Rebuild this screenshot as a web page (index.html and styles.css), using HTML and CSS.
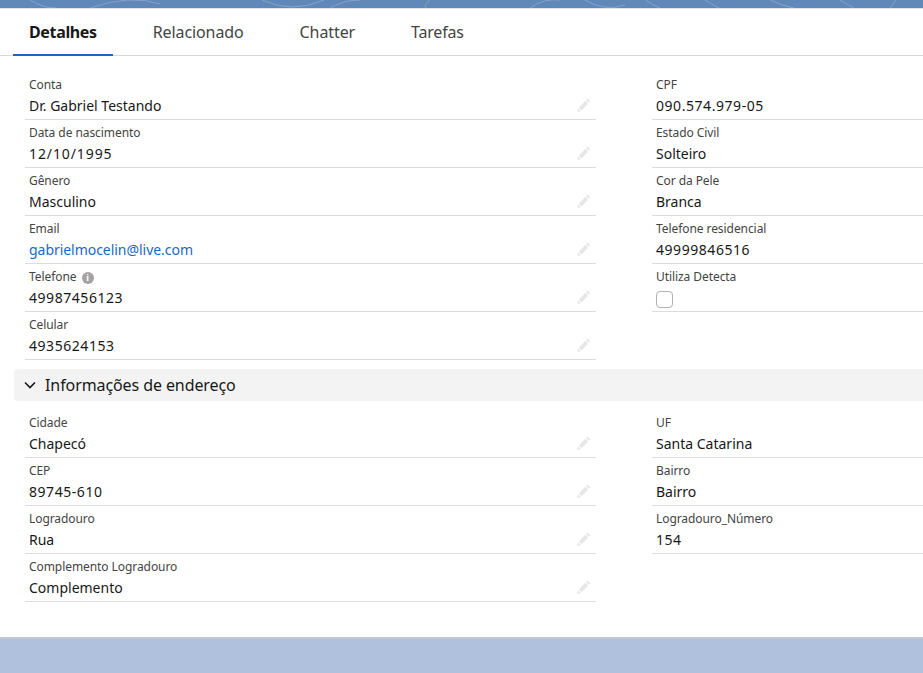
FILE: index.html
```html
<!DOCTYPE html>
<html lang="pt-BR">
<head>
<meta charset="utf-8">
<title>Detalhes</title>
<link rel="stylesheet" href="styles.css">
</head>
<body>
<svg width="0" height="0" class="defs"><defs>
<symbol id="pen" viewBox="0 0 16 16"><path d="M11.6 1.6l2.8 2.8-1.4 1.4-2.8-2.8zM9.4 3.8l2.8 2.8-6.6 6.6-2.8-2.8zM2 11.2l2.8 2.8-3.8 1z"/></symbol>
</defs></svg>
<div class="banner">
<svg class="swirl" width="923" height="8" viewBox="0 0 923 8" fill="none" stroke="#86a4cb" stroke-width="1">
<path d="M30 0q12 8 26 8M90 8q40-14 70-4M262 0q30 14 62 0M330 8q14-8 30-8M430 0q-6 4-4 8M530 8q14-10 30-8M585 0q20 12 40 5M660 8q-10-4-14-8M705 0q10 6 14 8M770 0q12 6 24 8M840 0q6 4 14 8M890 8l6-8"/>
</svg>
</div>
<main class="card">
<nav class="tabs">
<a class="tab active">Detalhes</a>
<a class="tab">Relacionado</a>
<a class="tab">Chatter</a>
<a class="tab">Tarefas</a>
</nav>
<section class="fields first">
<div class="col">
<div class="field"><span class="label">Conta</span><span class="value">Dr. Gabriel Testando</span><svg class="pen"><use href="#pen"/></svg></div>
<div class="field"><span class="label">Data de nascimento</span><span class="value date">12/10/1995</span><svg class="pen"><use href="#pen"/></svg></div>
<div class="field"><span class="label">Gênero</span><span class="value">Masculino</span><svg class="pen"><use href="#pen"/></svg></div>
<div class="field"><span class="label">Email</span><span class="value link">gabrielmocelin@live.com</span><svg class="pen"><use href="#pen"/></svg></div>
<div class="field"><span class="label">Telefone <i class="info">i</i></span><span class="value num">49987456123</span><svg class="pen"><use href="#pen"/></svg></div>
<div class="field"><span class="label">Celular</span><span class="value num">4935624153</span><svg class="pen"><use href="#pen"/></svg></div>
</div>
<div class="col right">
<div class="field"><span class="label">CPF</span><span class="value num">090.574.979-05</span></div>
<div class="field"><span class="label">Estado Civil</span><span class="value">Solteiro</span></div>
<div class="field"><span class="label">Cor da Pele</span><span class="value">Branca</span></div>
<div class="field"><span class="label">Telefone residencial</span><span class="value num">49999846516</span></div>
<div class="field"><span class="label">Utiliza Detecta</span><span class="value"><span class="check"></span></span></div>
</div>
</section>
<h2 class="section-head"><svg class="chev" viewBox="0 0 12 12"><path d="M1 3.5L6 8.5l5-5"/></svg>Informações de endereço</h2>
<section class="fields">
<div class="col">
<div class="field"><span class="label">Cidade</span><span class="value">Chapecó</span><svg class="pen"><use href="#pen"/></svg></div>
<div class="field"><span class="label">CEP</span><span class="value num">89745-610</span><svg class="pen"><use href="#pen"/></svg></div>
<div class="field"><span class="label">Logradouro</span><span class="value">Rua</span><svg class="pen"><use href="#pen"/></svg></div>
<div class="field"><span class="label">Complemento Logradouro</span><span class="value">Complemento</span><svg class="pen"><use href="#pen"/></svg></div>
</div>
<div class="col right">
<div class="field"><span class="label">UF</span><span class="value">Santa Catarina</span></div>
<div class="field"><span class="label">Bairro</span><span class="value">Bairro</span></div>
<div class="field"><span class="label">Logradouro_Número</span><span class="value num">154</span></div>
</div>
</section>
</main>
</body>
</html>
```
FILE: styles.css
```css
* { box-sizing: border-box; }
html, body { margin: 0; padding: 0; height: 100%; overflow: hidden; }
body {
  background: #b0c1dd;
  font-family: "Noto Sans", "Open Sans", sans-serif;
  color: #181818;
  width: 923px;
}
.defs { position: absolute; }
.banner { height: 8px; background: #6088b8; }
.swirl { display: block; }
.card {
  height: 631px;
  background: #fff;
  border-top: 1px solid #e5e5e5;
  border-bottom: 2px solid #c3c9d2;
  overflow: hidden;
}
.tabs {
  display: flex;
  gap: 24px;
  height: 47px;
  padding-left: 13px;
  border-bottom: 1px solid #d8d8d8;
}
.tab {
  font-size: 16px;
  line-height: 46px;
  height: 47px;
  padding: 0 16px;
  color: #444;
  letter-spacing: -0.1px;
  white-space: nowrap;
}
.tab:last-child { letter-spacing: -0.2px; }
.tab.active {
  color: #181818;
  font-weight: 700;
  letter-spacing: -0.35px;
  border-bottom: 2px solid #1f64c8;
}
.fields {
  display: flex;
  padding-left: 25px;
  width: 1000px;
  gap: 56px;
}
.fields.first { padding-top: 16px; margin-bottom: 9px; }
.col { width: 571px; }
.col.right { width: 348px; }
.field {
  position: relative;
  display: flex;
  flex-direction: column;
  height: 48px;
  padding: 0 4px;
  border-bottom: 1px solid #dcdcdc;
}
.label {
  font-size: 12px;
  line-height: 16px;
  height: 21px;
  padding-top: 5px;
  letter-spacing: -0.07px;
  color: #444;
}
.value {
  font-size: 14px;
  line-height: 20px;
  margin-top: 3px;
  color: #181818;
}
.num { letter-spacing: 0.55px; }
.date { letter-spacing: 0.9px; }
.link { color: #1b67c4; letter-spacing: -0.04px; }
.pen {
  position: absolute;
  right: 4px;
  top: 25px;
  width: 16px;
  height: 16px;
  fill: #e6e6e6;
}
.info {
  display: inline-block;
  width: 12px;
  height: 12px;
  border-radius: 50%;
  background: #a3a3a3;
  color: #fff;
  font-size: 9px;
  line-height: 12px;
  font-weight: 700;
  font-style: normal;
  text-align: center;
  margin-left: 2px;
  vertical-align: 0;
}
.check {
  display: block;
  width: 17px;
  height: 17px;
  margin-top: 3px;
  border: 1px solid #b0b0b0;
  border-radius: 4px;
}
.section-head {
  display: flex;
  align-items: center;
  margin: 0 -4px 9px 14px;
  height: 32px;
  padding-left: 10px;
  background: #f3f3f3;
  border-radius: 4px 0 0 4px;
  font-size: 16px;
  font-weight: 400;
  letter-spacing: -0.09px;
  color: #181818;
}
.chev {
  width: 12px;
  height: 12px;
  margin-right: 9px;
  fill: none;
  stroke: #181818;
  stroke-width: 1.6;
}
```
